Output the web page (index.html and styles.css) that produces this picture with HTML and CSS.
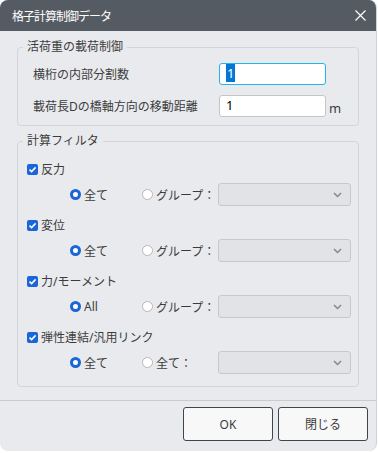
FILE: index.html
```html
<!DOCTYPE html>
<html lang="ja">
<head>
    <meta charset="UTF-8">
    <meta name="viewport" content="width=device-width, initial-scale=1.0">
    <title>格子計算制御データ</title>
    <link rel="stylesheet" href="styles.css">
</head>
<body>
    <div class="dialog">
        <div class="titlebar">
            <span class="title">格子計算制御データ</span>
            <svg class="close" width="11" height="11" viewBox="0 0 11 11">
                <path d="M0.5 0.5 L10.5 10.5 M10.5 0.5 L0.5 10.5" stroke="#fff" stroke-width="1.2" fill="none"/>
            </svg>
        </div>

        <div class="content">
            <fieldset>
                <legend>活荷重の載荷制御</legend>
                <div class="rows">
                    <div class="row">
                        <span class="label">横桁の内部分割数</span>
                        <div class="field focused"><span class="sel">1</span></div>
                    </div>
                    <div class="row">
                        <span class="label">載荷長Dの橋軸方向の移動距離</span>
                        <div class="field">1</div>
                        <span class="unit">m</span>
                    </div>
                </div>
            </fieldset>

            <fieldset class="filter">
                <legend>計算フィルタ</legend>
                <div class="groups">
                    <div class="group">
                        <div class="check"><span class="box"></span>反力</div>
                        <div class="choices">
                            <span class="opt"><span class="radio on"></span>全て</span>
                            <span class="opt opt2"><span class="radio"></span>グループ：</span>
                            <span class="select"></span>
                        </div>
                    </div>
                    <div class="group">
                        <div class="check"><span class="box"></span>変位</div>
                        <div class="choices">
                            <span class="opt"><span class="radio on"></span>全て</span>
                            <span class="opt opt2"><span class="radio"></span>グループ：</span>
                            <span class="select"></span>
                        </div>
                    </div>
                    <div class="group">
                        <div class="check"><span class="box"></span>力/モーメント</div>
                        <div class="choices">
                            <span class="opt"><span class="radio on"></span>All</span>
                            <span class="opt opt2"><span class="radio"></span>グループ：</span>
                            <span class="select"></span>
                        </div>
                    </div>
                    <div class="group">
                        <div class="check"><span class="box"></span>弾性連結/汎用リンク</div>
                        <div class="choices">
                            <span class="opt"><span class="radio on"></span>全て</span>
                            <span class="opt opt2"><span class="radio"></span>全て：</span>
                            <span class="select"></span>
                        </div>
                    </div>
                </div>
            </fieldset>
        </div>

        <div class="footer">
            <button class="btn">OK</button>
            <button class="btn">閉じる</button>
        </div>
    </div>
</body>
</html>
```

FILE: styles.css
```css
body {
    margin: 0;
    background-color: #ffffff;
    font-family: "Noto Sans", "Noto Sans CJK JP", sans-serif;
    font-size: 12px;
    color: #3c3c3c;
}
.dialog {
    width: 376px;
    height: 451px;
    background-color: #e9eaee;
    border-right: 1px solid #cfd1d5;
    border-radius: 8px;
    overflow: hidden;
}
.titlebar {
    height: 31px;
    background-color: #555b63;
    color: #fff;
    display: flex;
    align-items: center;
    justify-content: space-between;
    padding: 0 10px 0 12px;
}
.title {
    font-size: 12px;
    letter-spacing: -1px;
}
.content {
    padding: 7px 17px 13px;
}
fieldset {
    margin: 0;
    padding: 0;
    border: 1px solid #d3d5d9;
    border-radius: 4px;
}
legend {
    margin-left: 5px;
    padding: 0 4px;
    line-height: 18px;
}
.rows {
    display: flex;
    flex-direction: column;
    gap: 9px;
    padding: 7px 0 8px 15px;
}
.row {
    display: flex;
    align-items: center;
}
.label {
    width: 186px;
}
.field {
    box-sizing: border-box;
    width: 107px;
    height: 22px;
    background: #fff;
    border: 1.5px solid #c4c6ca;
    border-radius: 3px;
    padding: 0 6px;
    line-height: 19px;
    font-size: 13px;
    color: #000;
}
.field.focused {
    border-color: #22b4ec;
}
.sel {
    background: #0078d7;
    color: #fff;
    padding: 0 1px;
}
.unit {
    margin: 5px 0 0 3px;
    font-size: 13px;
}
.filter {
    margin-top: 6px;
}
.groups {
    padding: 10px 0 12px 9px;
}
.group {
    margin-bottom: 10px;
}
.group:last-child {
    margin-bottom: 0;
}
.check {
    height: 18px;
    display: flex;
    align-items: center;
    gap: 3px;
}
.box {
    width: 11px;
    height: 11px;
    border-radius: 2px;
    background: #1a66d9 url("data:image/svg+xml,%3Csvg xmlns='http://www.w3.org/2000/svg' viewBox='0 0 11 11'%3E%3Cpath d='M2.5 5.6 L4.6 7.6 L8.6 3.4' stroke='white' stroke-width='1.6' fill='none'/%3E%3C/svg%3E") center / 11px 11px no-repeat;
}
.choices {
    margin-top: 5px;
    height: 23px;
    display: flex;
    align-items: center;
    padding-left: 43px;
}
.opt {
    width: 72px;
    display: flex;
    align-items: center;
    gap: 3px;
}
.opt2 {
    width: 76px;
}
.radio {
    box-sizing: border-box;
    width: 11px;
    height: 11px;
    border-radius: 50%;
    background: #fff;
    border: 1px solid #b5b7bb;
}
.radio.on {
    border: 3px solid #1a66d9;
}
.select {
    box-sizing: border-box;
    width: 133px;
    height: 23px;
    background: #e2e3e6 url("data:image/svg+xml,%3Csvg xmlns='http://www.w3.org/2000/svg' viewBox='0 0 9 6'%3E%3Cpath d='M1 1 L4.5 4.5 L8 1' stroke='%23888' stroke-width='1.5' fill='none'/%3E%3C/svg%3E") right 8px center / 9px 6px no-repeat;
    border: 1px solid #c6c8cc;
    border-radius: 3px;
}
.footer {
    border-top: 1px solid #c9cbcf;
    display: flex;
    justify-content: flex-end;
    gap: 5px;
    padding: 6px 8px 0;
}
.btn {
    width: 90px;
    height: 34px;
    background: #f8f8f9;
    border: 1.5px solid #40444b;
    border-radius: 3px;
    font-family: "Noto Sans", "Noto Sans CJK JP", sans-serif;
    font-size: 12px;
    color: #3c3c3c;
}
```
